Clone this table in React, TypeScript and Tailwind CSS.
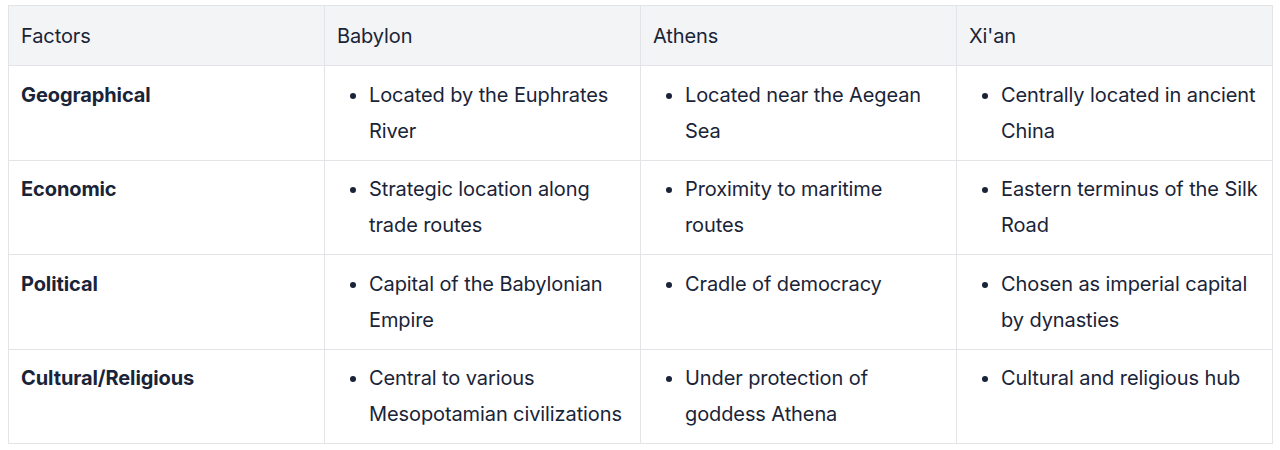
const headers = ["Factors", "Babylon", "Athens", "Xi'an"];

const rows: { factor: string; cells: string[] }[] = [
  {
    factor: "Geographical",
    cells: [
      "Located by the Euphrates River",
      "Located near the Aegean Sea",
      "Centrally located in ancient China",
    ],
  },
  {
    factor: "Economic",
    cells: [
      "Strategic location along trade routes",
      "Proximity to maritime routes",
      "Eastern terminus of the Silk Road",
    ],
  },
  {
    factor: "Political",
    cells: [
      "Capital of the Babylonian Empire",
      "Cradle of democracy",
      "Chosen as imperial capital by dynasties",
    ],
  },
  {
    factor: "Cultural/Religious",
    cells: [
      "Central to various Mesopotamian civilizations",
      "Under protection of goddess Athena",
      "Cultural and religious hub",
    ],
  },
];

export default function App() {
  return (
    <main className="w-full bg-white pl-2 pr-[7px] pt-[5px] font-['Inter','Liberation_Sans',sans-serif] text-[20px] leading-[36px] tracking-[-0.1px] text-[#1a2438]">
      <table className="w-full table-fixed border-collapse border border-[#e2e4e8]">
        <thead>
          <tr className="bg-[#f3f4f6]">
            {headers.map((h) => (
              <th
                key={h}
                className="border border-[#e2e4e8] px-3 py-[11.5px] text-left font-normal"
              >
                {h}
              </th>
            ))}
          </tr>
        </thead>
        <tbody>
          {rows.map((r) => (
            <tr key={r.factor}>
              <td className="border border-[#e2e4e8] px-3 py-[10.75px] align-top font-bold">
                {r.factor}
              </td>
              {r.cells.map((c) => (
                <td
                  key={c}
                  className="border border-[#e2e4e8] px-3 py-[10.75px] align-top"
                >
                  <ul className="list-disc pl-8">
                    <li>{c}</li>
                  </ul>
                </td>
              ))}
            </tr>
          ))}
        </tbody>
      </table>
    </main>
  );
}
